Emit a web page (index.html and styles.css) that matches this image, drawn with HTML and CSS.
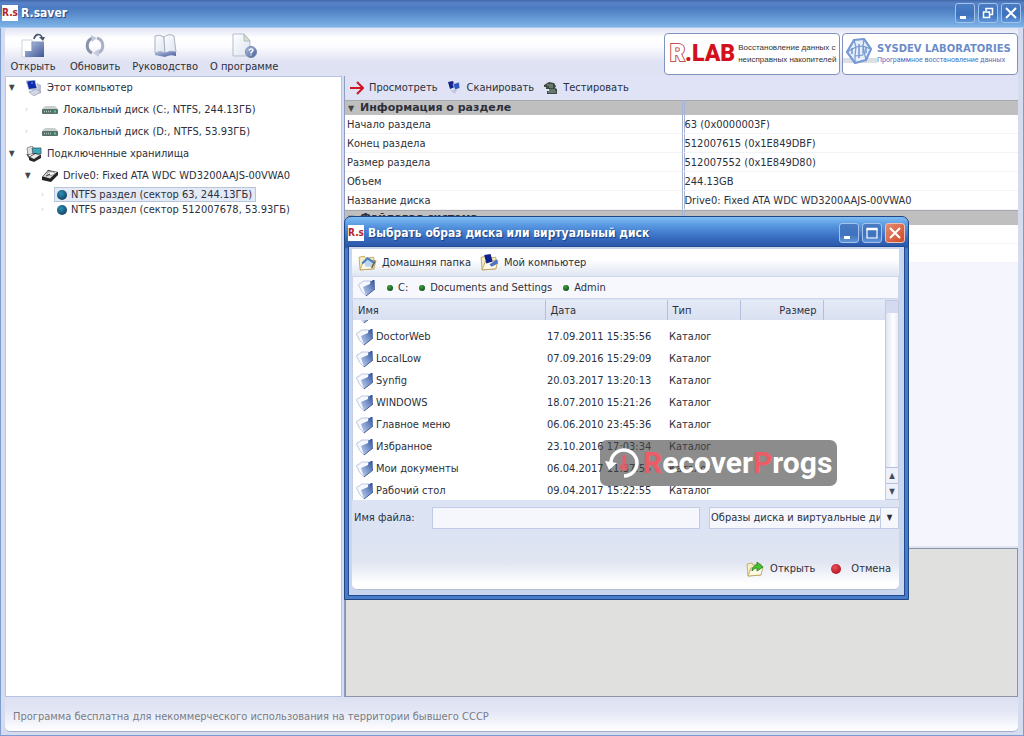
FILE: index.html
```html
<!DOCTYPE html>
<html lang="ru">
<head>
<meta charset="utf-8">
<title>R.saver</title>
<link rel="stylesheet" href="styles.css">
</head>
<body>
<svg class="defs" aria-hidden="true">
  <defs>
    <linearGradient id="gBlue" x1="0" y1="0" x2="1" y2="1"><stop offset="0" stop-color="#b9c6e6"/><stop offset="1" stop-color="#3f5796"/></linearGradient>
    <linearGradient id="gPaper" x1="0" y1="0" x2="1" y2="1"><stop offset="0" stop-color="#fff"/><stop offset="1" stop-color="#dbe3f0"/></linearGradient>
    <linearGradient id="gFolder" x1="1" y1="0" x2="0" y2="1"><stop offset="0" stop-color="#2c4a92"/><stop offset=".5" stop-color="#7c97cc"/><stop offset="1" stop-color="#c5d2ec"/></linearGradient>
    <radialGradient id="gBall" cx=".4" cy=".35" r=".7"><stop offset="0" stop-color="#2f8fb8"/><stop offset="1" stop-color="#12405f"/></radialGradient>
    <radialGradient id="gGreen" cx=".4" cy=".35" r=".7"><stop offset="0" stop-color="#3fa33c"/><stop offset="1" stop-color="#0a4a12"/></radialGradient>
    <radialGradient id="gRed" cx=".4" cy=".35" r=".7"><stop offset="0" stop-color="#e8505a"/><stop offset="1" stop-color="#b3131f"/></radialGradient>
  </defs>
  <symbol id="folder" viewBox="0 0 18 18">
    <path d="M0.500 6Q1 4 3.500 4 4 2.500 6 2L13 2 12 8 8 17Q3 13 0.500 6z" fill="#f6f8fd" stroke="#b3c0da" stroke-width=".9"/>
    <path d="M5 8 12 5 12.500 2 14 2 14.500 1 16.500 1 17 10 8 17z" fill="url(#gFolder)"/>
    <path d="M8 17 17 10" fill="none" stroke="#4a5f97" stroke-width="1"/>
  </symbol>
  <symbol id="yfolder" viewBox="0 0 18 16">
    <path d="M1 3 6 2 7 4 15 3 15 14 2 15z" fill="#f5edc4" stroke="#c2ab62" stroke-width=".9"/>
    <path d="M2 15 5 7 17 6 15 14z" fill="#fdfaea" stroke="#b79d50" stroke-width=".8"/>
  </symbol>
  <symbol id="computer" viewBox="0 0 16 16">
    <path d="M0 1 9 0 11 9 3 10z" fill="#c9d0e6" stroke="#aab2cc" stroke-width=".6"/>
    <path d="M1 1.500 8.500 .5 10.500 8 3 9z" fill="#0e2aa8"/>
    <path d="M11 3 15 5 15 13 12 14z" fill="#b9bfd2"/>
    <path d="M3 12 10 9 15 12 8 16z" fill="#d3d7e4" stroke="#8c93ab" stroke-width=".6"/>
    <path d="M5 3 7 3" stroke="#7da0ff" stroke-width="1"/>
  </symbol>
  <symbol id="disk" viewBox="0 0 16 10">
    <path d="M3 1H13L16 4H0z" fill="#c9cfcd"/>
    <rect x="0" y="4" width="16" height="5" rx="1" fill="#59706f"/>
    <path d="M2 6.500H10" stroke="#a9c4b9" stroke-width="1.500" stroke-dasharray="1 1"/>
    <rect x="12" y="5.500" width="2" height="2" fill="#3ee07e"/>
  </symbol>
</svg>

<div class="window">
  <header class="titlebar">
    <span class="app-badge">R.s</span>
    <h1 class="window-title">R.saver</h1>
    <div class="caption-buttons">
      <button class="cap" aria-label="Свернуть"><svg viewBox="0 0 18 18"><path d="M4 13.500H10" stroke="#fff" stroke-width="3"/></svg></button>
      <button class="cap" aria-label="Восстановить"><svg viewBox="0 0 18 18" fill="none" stroke="#fff"><path d="M7 7V4.500H13.500V10.500H11" stroke-width="1.500"/><path d="M4.500 8H10.500V13.500H4.500z" stroke-width="1.500"/></svg></button>
      <button class="cap" aria-label="Закрыть"><svg viewBox="0 0 18 18"><path d="M4 4 14 14M14 4 4 14" stroke="#fff" stroke-width="2"/></svg></button>
    </div>
  </header>

  <div class="frame">
    <div class="toolbar">
      <div class="tools">
        <button class="tool"><svg viewBox="0 0 26 26"><path d="M2 7H12V24H2z" fill="#fff" stroke="#ccd3e2"/><path d="M12 9H24V24H5V18H12z" fill="url(#gBlue)"/><path d="M24 9H12V18" fill="none" stroke="#8795b8"/><path d="M14 6C15 1 20 0 22 4" fill="none" stroke="#49546e" stroke-width="1.600"/><path d="M19 4H25L23 8z" fill="#49546e"/></svg>Открыть</button>
        <button class="tool"><svg viewBox="0 0 26 26" fill="none"><path d="M11 5A8 8 0 0 0 10 20" stroke="#8993aa" stroke-width="3"/><path d="M15 5A8 8 0 0 1 16 20" stroke="#a9b1c6" stroke-width="3"/><path d="M9 2 15 5 10 9zM17 16 11 20 17 24z" fill="#c3cada"/></svg>Обновить</button>
        <button class="tool"><svg viewBox="0 0 26 26"><path d="M3 3Q8 1 12 4L13 20Q8 17 3 20z" fill="url(#gPaper)" stroke="#a9b1c2"/><path d="M12 4Q17 0 22 3L24 19Q18 17 13 20z" fill="url(#gPaper)" stroke="#a9b1c2"/><path d="M3 20Q8 17 13 20 18 17 24 19V23Q18 21 13 24 8 23 3 22z" fill="url(#gBlue)"/></svg>Руководство</button>
        <button class="tool"><svg viewBox="0 0 26 26"><path d="M2 1H13L19 8V23H2z" fill="url(#gPaper)" stroke="#b3bbcb"/><path d="M13 1V8H19z" fill="#d5e3d2" stroke="#a7b3b0" stroke-width=".8"/><circle cx="20" cy="19" r="5.500" fill="url(#gBlue)" stroke="#7685aa"/><path d="M18 17.500Q20 14.500 22 17 22 18.500 20 19.500V20.500M20 21.500V22.500" fill="none" stroke="#fff" stroke-width="1.400"/></svg>О программе</button>
      </div>
      <a class="banner banner-rlab" href="#">
        <span class="rlab"><span class="rlab-r">R</span>.LAB</span>
        <span class="rlab-note">Восстановление данных с<br>неисправных накопителей</span>
      </a>
      <a class="banner banner-sysdev" href="#">
        <svg class="hex" viewBox="0 0 26 26" fill="none" stroke="#7799d4"><path d="M8 2 18 1 25 11 20 22 9 25 1 14z" fill="#e6eefb" stroke-width="2.200"/><path d="M8 2 10 9 1 14M18 1 17 8 25 11M10 9 17 8 20 22M10 9 9 18 9 25M9 18 17 17 17 8" stroke-width="1.200"/><path d="M6 10V16M13 6V20M20 9V15" stroke-width="1.600"/></svg>
        <span class="sysdev"><b class="sysdev-name">SYSDEV LABORATORIES</b><span class="sysdev-note">Программное восстановление данных</span></span>
      </a>
    </div>

    <div class="panes">
      <nav class="tree">
        <ul class="tree-list">
          <li class="node"><span class="arrow">▼</span><svg class="ic16"><use href="#computer"/></svg><span>Этот компьютер</span></li>
          <li class="node level1"><span class="arrow dim">›</span><svg class="ic-disk"><use href="#disk"/></svg><span>Локальный диск (C:, NTFS, 244.13ГБ)</span></li>
          <li class="node level1"><span class="arrow dim">›</span><svg class="ic-disk"><use href="#disk"/></svg><span>Локальный диск (D:, NTFS, 53.93ГБ)</span></li>
          <li class="node"><span class="arrow">▼</span><svg class="ic16" viewBox="0 0 16 16"><path d="M1 2 6 0 8 2V7L2 9z" fill="#dfe3e6" stroke="#777" stroke-width=".8"/><path d="M6 2H15V8H7z" fill="#39a8b8" stroke="#456" stroke-width=".8"/><path d="M1 8 5 14 9 10" fill="none" stroke="#555" stroke-width="1.500"/><path d="M3 11 9 7 15 9V12L8 16 3 14z" fill="#292929"/><path d="M4 11 9 8 14 9 8 13z" fill="#e9e9e9"/></svg><span>Подключенные хранилища</span></li>
          <li class="node level1"><span class="arrow">▼</span><svg class="ic16" viewBox="0 0 16 16"><path d="M0 9 6 2 16 4V7L9 14 0 12z" fill="#222"/><path d="M1 8.500 6 3 15 4 8 10.500z" fill="#d9d9d9"/><ellipse cx="9" cy="5.500" rx="3.500" ry="1.800" fill="#fff" stroke="#666" stroke-width=".7"/><path d="M4 8 8 6" stroke="#333"/></svg><span>Drive0: Fixed ATA WDC WD3200AAJS-00VWA0</span></li>
          <li class="node part"><span class="arrow dim">›</span><span class="label selected"><svg class="ic10" viewBox="0 0 10 10"><circle cx="5" cy="5" r="5" fill="url(#gBall)"/></svg>NTFS раздел (сектор 63, 244.13ГБ)</span></li>
          <li class="node part"><span class="arrow dim">›</span><span class="label"><svg class="ic10" viewBox="0 0 10 10"><circle cx="5" cy="5" r="5" fill="url(#gBall)"/></svg>NTFS раздел (сектор 512007678, 53.93ГБ)</span></li>
        </ul>
      </nav>

      <main class="details">
        <div class="actions">
          <button class="action"><svg viewBox="0 0 14 14"><path d="M0 7H12M7 1 13 7 7 13" fill="none" stroke="#d01626" stroke-width="2"/></svg>Просмотреть</button>
          <button class="action"><svg viewBox="0 0 14 14"><path d="M1 1 6 0 8 6 3 8z" fill="#14238a"/><path d="M6 3 12 1 13 7 8 9z" fill="#3058c0" stroke="#dde" stroke-width=".7"/><path d="M3 9 10 9 8 13z" fill="#c2c8d8"/></svg>Сканировать</button>
          <button class="action"><svg viewBox="0 0 14 14"><path d="M0 4 5 1 10 2 12 5 11 7 13 8V13H3V10H5V8H2V6H0z" fill="#3d4a42"/><path d="M3 4 9 4M4 11H12M5 9 11 9M5 6H9" stroke="#93a598" stroke-width="1"/></svg>Тестировать</button>
        </div>
        <table class="info">
          <tbody>
            <tr class="group"><th scope="col"><span class="arrow">▼</span>Информация о разделе</th><th></th></tr>
            <tr><td>Начало раздела</td><td>63 (0x0000003F)</td></tr>
            <tr><td>Конец раздела</td><td>512007615 (0x1E849DBF)</td></tr>
            <tr><td>Размер раздела</td><td>512007552 (0x1E849D80)</td></tr>
            <tr><td>Объем</td><td>244.13GB</td></tr>
            <tr><td>Название диска</td><td>Drive0: Fixed ATA WDC WD3200AAJS-00VWA0</td></tr>
            <tr class="group"><th scope="col"><span class="arrow">▼</span>Файловая система</th><th></th></tr>
            <tr><td></td><td></td></tr>
            <tr><td></td><td></td></tr>
          </tbody>
        </table>
        <div class="blank"></div>
        <div class="preview"></div>
      </main>
    </div>

    <footer class="status">Программа бесплатна для некоммерческого использования на территории бывшего СССР</footer>
  </div>

  <section class="dialog" role="dialog" aria-labelledby="dlg-title">
    <header class="dialog-title">
      <span class="app-badge">R.s</span>
      <h2 class="window-title" id="dlg-title">Выбрать образ диска или виртуальный диск</h2>
      <div class="caption-buttons">
        <button class="cap" aria-label="Свернуть"><svg viewBox="0 0 18 18"><path d="M4 13.500H10" stroke="#fff" stroke-width="3"/></svg></button>
        <button class="cap" aria-label="Развернуть"><svg viewBox="0 0 18 18"><path d="M4 5H14V14H4z" fill="none" stroke="#fff" stroke-width="1.200"/><path d="M3.500 5H14.500" stroke="#fff" stroke-width="2.500"/></svg></button>
        <button class="cap close" aria-label="Закрыть"><svg viewBox="0 0 18 18"><path d="M4 4 14 14M14 4 4 14" stroke="#fff" stroke-width="2"/></svg></button>
      </div>
    </header>
    <div class="dialog-body">
      <div class="places">
        <button class="place"><svg viewBox="0 0 18 16"><use href="#yfolder"/><path d="M6 8 10 5 14 8V12H7z" fill="#b9d5f2"/><path d="M4 9 9 4 15 8" fill="none" stroke="#4a7fc0" stroke-width="2"/><path d="M13 13 16 7" stroke="#6b6040" stroke-width="1.500"/></svg>Домашняя папка</button>
        <button class="place"><svg viewBox="0 0 18 16"><use href="#yfolder"/><path d="M4 1 10 0 12 7 6 9z" fill="#10208c"/><path d="M9 10 16 5 17 9 11 12z" fill="#5272c4"/></svg>Мой компьютер</button>
      </div>
      <nav class="path">
        <svg class="ic18"><use href="#folder"/></svg>
        <a class="crumb" href="#"><svg viewBox="0 0 6 6"><circle cx="3" cy="3" r="3" fill="url(#gGreen)"/></svg>C:</a>
        <a class="crumb" href="#"><svg viewBox="0 0 6 6"><circle cx="3" cy="3" r="3" fill="url(#gGreen)"/></svg>Documents and Settings</a>
        <a class="crumb" href="#"><svg viewBox="0 0 6 6"><circle cx="3" cy="3" r="3" fill="url(#gGreen)"/></svg>Admin</a>
      </nav>
      <div class="listing">
        <div class="viewport">
          <table class="files">
            <colgroup><col class="c-name"><col class="c-date"><col class="c-type"><col class="c-size"><col></colgroup>
            <thead><tr><th>Имя</th><th>Дата</th><th>Тип</th><th class="num">Размер</th><th></th></tr></thead>
            <tbody>
              <tr class="partial"><td colspan="5"><div class="sliver"><svg class="ic18"><use href="#folder"/></svg></div></td></tr>
              <tr><td><span class="file"><svg class="ic18"><use href="#folder"/></svg>DoctorWeb</span></td><td>17.09.2011 15:35:56</td><td>Каталог</td><td></td><td></td></tr>
              <tr><td><span class="file"><svg class="ic18"><use href="#folder"/></svg>LocalLow</span></td><td>07.09.2016 15:29:09</td><td>Каталог</td><td></td><td></td></tr>
              <tr><td><span class="file"><svg class="ic18"><use href="#folder"/></svg>Synfig</span></td><td>20.03.2017 13:20:13</td><td>Каталог</td><td></td><td></td></tr>
              <tr><td><span class="file"><svg class="ic18"><use href="#folder"/></svg>WINDOWS</span></td><td>18.07.2010 15:21:26</td><td>Каталог</td><td></td><td></td></tr>
              <tr><td><span class="file"><svg class="ic18"><use href="#folder"/></svg>Главное меню</span></td><td>06.06.2010 23:45:36</td><td>Каталог</td><td></td><td></td></tr>
              <tr><td><span class="file"><svg class="ic18"><use href="#folder"/></svg>Избранное</span></td><td>23.10.2016 17:03:34</td><td>Каталог</td><td></td><td></td></tr>
              <tr><td><span class="file"><svg class="ic18"><use href="#folder"/></svg>Мои документы</span></td><td>06.04.2017 11:37:55</td><td>Каталог</td><td></td><td></td></tr>
              <tr><td><span class="file"><svg class="ic18"><use href="#folder"/></svg>Рабочий стол</span></td><td>09.04.2017 15:22:55</td><td>Каталог</td><td></td><td></td></tr>
            </tbody>
          </table>
        </div>
        <div class="scrollbar"><span class="thumb"></span><button class="sb" aria-label="Вверх">▲</button><button class="sb" aria-label="Вниз">▼</button></div>
      </div>
      <div class="fields">
        <label class="field-label" for="fname">Имя файла:</label>
        <input class="fname" id="fname" type="text">
        <div class="picker">
          <select class="ftype" aria-label="Тип файлов"><option>Образы диска и виртуальные диски</option></select>
          <span class="picker-arrow">▼</span>
        </div>
      </div>
      <div class="commands">
        <button class="command"><svg class="ic18" viewBox="0 0 18 16"><use href="#yfolder"/><path d="M6 10C6 6 9 4 11 4V1L17 6 11 10V7C9 7 8 8 6 10z" fill="#45c531" stroke="#1e7a19" stroke-width=".8"/></svg>Открыть</button>
        <button class="command cancel"><svg class="ic10" viewBox="0 0 10 10"><circle cx="5" cy="5" r="5" fill="url(#gRed)"/></svg>Отмена</button>
      </div>
    </div>
  </section>

  <div class="watermark">
    <svg viewBox="0 0 36 36" fill="none"><path d="M6 19A13 13 0 1 1 19 31" stroke="#fff" stroke-width="3.500"/><path d="M0 16 12 18 4 25z" fill="#fff"/><path d="M19 10V18" stroke="#ee5b66" stroke-width="3"/><circle cx="19" cy="22" r="4" fill="#ee5b66" fill-opacity=".8"/></svg>
    <span class="wm-text"><span class="wm-red">R</span>ecover<span class="wm-red">P</span>rogs</span>
  </div>
</div>
</body>
</html>
```

FILE: styles.css
```css
* { box-sizing: border-box; }

html, body { height: 100%; }

body {
  margin: 0;
  font: 11px/14px "DejaVu Sans Condensed", "DejaVu Sans", sans-serif;
  color: #2c303c;
  background: #dfe2f2;
}

button {
  margin: 0;
  padding: 0;
  border: 0;
  background: none;
  font: inherit;
  color: inherit;
}

a { color: inherit; text-decoration: none; }
svg { display: block; flex: none; }
.defs { position: absolute; width: 0; height: 0; }

.ic10 { width: 10px; height: 10px; }
.ic16 { width: 16px; height: 16px; }
.ic18 { width: 18px; height: 18px; }
.ic-disk { width: 16px; height: 10px; }

.window {
  position: relative;
  display: flex;
  flex-direction: column;
  height: 100%;
  overflow: hidden;
}

/* Title bars */
.titlebar {
  display: flex;
  align-items: center;
  height: 28px;
  flex: none;
  padding: 0 3px 2px 2px;
  gap: 3px;
  border-bottom: 1px solid #a9c8ee;
  background: linear-gradient(#3f67a8, #5a84c9 3px, #4a7ac0 8px, #7db3e6);
}

.app-badge {
  width: 16px;
  height: 16px;
  background: #fff;
  color: #b5222c;
  font: bold 10px/15px "DejaVu Sans Condensed", sans-serif;
  text-align: center;
  overflow: hidden;
}

.window-title {
  flex: 1;
  margin: 0;
  color: #fff;
  font: bold 12px/16px "DejaVu Sans Condensed", "DejaVu Sans", sans-serif;
  text-shadow: 1px 1px 1px #1d3c7c;
}

.caption-buttons { display: flex; gap: 3px; }

.cap {
  width: 20px;
  height: 20px;
  border: 1px solid #a5c2ec;
  border-radius: 3px;
  background: linear-gradient(#4a7cc4, #3e72bd 60%, #5e95d8);
}

.cap.close {
  border-color: #efc0b4;
  background: linear-gradient(135deg, #e58d72, #cf4a28);
}

/* Main frame */
.frame {
  display: flex;
  flex-direction: column;
  flex: 1;
  min-height: 0;
  padding: 0 5px 3px 4px;
  border: solid #7f9cd0;
  border-width: 0 1px 1px;
  background: #d6dcf0;
}

.toolbar {
  display: flex;
  align-items: flex-start;
  height: 48px;
  gap: 2px;
  padding: 5px 0 0 3px;
  background: linear-gradient(#dfe3f3, #fff 10px, #fdfdff 18px, #dfe2f2 34px);
}

.tools { display: flex; flex: 1; gap: 12px; }

.tool {
  display: flex;
  flex-direction: column;
  align-items: center;
  min-width: 50px;
  gap: 1px;
}

.tool svg { width: 26px; height: 26px; }

.banner {
  display: flex;
  align-items: center;
  width: 176px;
  height: 42px;
  border: 1px solid #8292be;
  border-radius: 4px;
  background: #fff;
}

.banner-rlab { gap: 3px; padding-left: 5px; }

.rlab {
  color: #d3111d;
  font: 900 23px/30px Roboto, "Liberation Sans", sans-serif;
}

.rlab-r { color: #fff; -webkit-text-stroke: 2px #c3505a; paint-order: stroke fill; }

.rlab-note {
  flex: 1;
  color: #333;
  font: 8px/12px "Liberation Sans", Arial, sans-serif;
  white-space: nowrap;
}

.banner-sysdev {
  gap: 5px;
  padding: 0 3px;
  color: #6c8cc8;
  background: linear-gradient(#fff 60%, #d9dde4 60%, #dde1e8 73%, #fff 73%) left / 34px 100% no-repeat #fff;
}

.hex { width: 26px; height: 26px; margin-bottom: 6px; }
.sysdev { display: flex; flex-direction: column; white-space: nowrap; }
.sysdev-name { font: bold 10px/12px "DejaVu Sans", sans-serif; }
.sysdev-note { color: #4a6fc0; font: 7px/11px Roboto, "Liberation Sans", sans-serif; }

.panes { display: flex; flex: 1; min-height: 0; gap: 2px; }

/* Tree */
.tree {
  width: 337px;
  flex: none;
  border: 1px solid #b7c3e3;
  background: #fff;
}

.tree-list { margin: 0; padding: 0; list-style: none; }

.node {
  display: flex;
  align-items: center;
  height: 22px;
  padding-left: 3px;
  gap: 5px;
  white-space: nowrap;
}

.level1 { padding-left: 19px; }
.part { height: 15px; padding-left: 35px; gap: 1px; }

.arrow { width: 12px; color: #444; font-size: 8px; }
.dim { color: #c3c7d2; }

.label {
  display: flex;
  align-items: center;
  height: 15px;
  gap: 4px;
  padding: 0 3px 0 2px;
  border: 1px solid transparent;
}

.selected { border-color: #b9c5dc; background: #e3e9f5; }

/* Details */
.details {
  display: flex;
  flex-direction: column;
  flex: 1;
  min-width: 0;
  border-left: 1px solid #8f9cc4;
  background: #f5f6fd;
}

.actions {
  display: flex;
  height: 24px;
  flex: none;
  gap: 10px;
  padding-left: 5px;
  background: #dfe3f5;
}

.action { display: flex; align-items: center; gap: 5px; }
.action svg { width: 14px; height: 14px; }

.info {
  width: 100%;
  border-spacing: 0;
  table-layout: fixed;
  background: #fff;
}

.info td, .info th {
  height: 19px;
  padding: 1px 2px 0;
  border-bottom: 1px solid #f2f3f8;
  text-align: left;
  white-space: nowrap;
}

.info td + td, .info th + th { padding-left: 0; border-left: 3px double #a9b3d3; }

.info .group th {
  height: 15px;
  padding: 0 1px;
  border-top: 1px solid #a8a8ac;
  border-bottom: 0;
  background: #bfbfbf;
  font: bold 11px/14px "DejaVu Sans", sans-serif;
}

.info .group .arrow { display: inline-block; width: 14px; padding-left: 2px; font-size: 8px; line-height: 10px; }

.blank { flex: 1; }

.preview {
  height: 149px;
  flex: none;
  border: 1px solid #8b93a6;
  box-shadow: 0 -2px 0 #dfe3f2;
  background: #e0e0df;
}

.status {
  height: 35px;
  flex: none;
  padding: 13px 8px 0;
  border-bottom: 1px solid #a3aec9;
  border-radius: 0 0 5px 5px;
  background: linear-gradient(#dce0f1, #e3e6f5 40%, #fff);
  color: #797c86;
}

/* File dialog */
.dialog {
  position: absolute;
  left: 344px;
  top: 216px;
  width: 565px;
  display: flex;
  flex-direction: column;
  padding: 0 3px 3px;
  border: 1px solid #1f4686;
  border-radius: 7px 7px 0 0;
  background: linear-gradient(#7fbdf2, #5899e2 8px, #3568bd 22px, #2a56a6 30px, #4a7cc6 32px);
}

.dialog-title { display: flex; align-items: center; gap: 4px; height: 29px; padding: 2px 0 0; }

.dialog-body {
  display: flex;
  flex-direction: column;
  padding: 2px 5px 5px 3px;
  border: 1px solid #1f4b94;
  background: #cad6ee;
}

.places {
  display: flex;
  gap: 9px;
  height: 27px;
  padding-left: 6px;
  background: linear-gradient(#fff 10px, #dfe6f2);
}

.place { display: flex; align-items: center; gap: 5px; }
.place svg { width: 19px; height: 17px; }

.path {
  display: flex;
  align-items: center;
  height: 23px;
  padding-left: 5px;
  gap: 11px;
  border: 1px solid #cdd6ea;
  background: #f7f8fe;
}

.crumb { display: flex; align-items: center; gap: 5px; }
.crumb svg { width: 6px; height: 6px; }

.listing { display: flex; height: 201px; padding-top: 1px; background: #dbe3f3; }
.viewport { flex: 1; overflow: hidden; border-left: 1px solid #c3cde4; background: #fff; }

.files { width: 100%; border-collapse: collapse; table-layout: fixed; }
.c-name { width: 192px; }
.c-date { width: 122px; }
.c-type { width: 73px; }
.c-size { width: 83px; }

.files th {
  height: 20px;
  padding: 2px 6px 0 5px;
  border-right: 1px solid #b3bfdd;
  background: linear-gradient(#e5eaf6, #d8e0f1);
  font-weight: normal;
  text-align: left;
}

.files th:last-child { border-right: 0; }
.files .num { text-align: right; }
.files td { height: 22px; padding: 0 2px; white-space: nowrap; }
.files .partial td { height: 6px; }
.files td:first-child { padding-left: 3px; }

.sliver { display: flex; height: 6px; align-items: flex-end; padding-bottom: 2px; overflow: hidden; }
.file { display: flex; align-items: center; gap: 2px; }

.scrollbar {
  display: flex;
  flex-direction: column;
  width: 14px;
  border: 1px solid #c0cae2;
  background: linear-gradient(90deg, #dfe4f3, #fff 60%, #e8ecf8);
}

.thumb { flex: 1; border-top: 12px solid #d4daf0; }

.sb {
  height: 16px;
  border-top: 1px solid #b6c0da;
  background: #eef1fa;
  color: #444c5e;
  font-size: 8px;
  line-height: 14px;
}

.fields {
  display: flex;
  align-items: center;
  height: 36px;
  padding-left: 2px;
  background: #dce4f4;
}

.field-label { width: 78px; }

.fname {
  flex: 1;
  min-width: 0;
  height: 22px;
  margin-right: 9px;
  border: 1px solid #c0cbe5;
  background: #f6f7fd;
  font: inherit;
}

.picker { display: flex; width: 190px; height: 22px; border: 1px solid #c0cbe5; background: #f6f7fd; }

.ftype {
  appearance: none;
  flex: 1;
  min-width: 0;
  padding: 0 0 0 1px;
  border: 0;
  background: none;
  color: inherit;
  font: inherit;
  overflow: hidden;
}

.picker-arrow {
  width: 18px;
  border-left: 1px solid #c0cbe5;
  font-size: 8px;
  line-height: 20px;
  text-align: center;
}

.commands {
  display: flex;
  justify-content: flex-end;
  align-items: flex-end;
  height: 54px;
  gap: 16px;
  padding: 0 8px 11px;
  border-bottom: 1px solid #b3bdd6;
  border-radius: 0 0 5px 5px;
  background: linear-gradient(#dce3f2, #e2e6f2 50%, #fff 90%);
}

.command { display: flex; align-items: center; height: 18px; gap: 6px; }
.cancel { gap: 10px; }

/* Watermark */
.watermark {
  position: absolute;
  left: 600px;
  top: 440px;
  display: flex;
  align-items: center;
  width: 237px;
  height: 46px;
  padding-left: 5px;
  gap: 2px;
  border-radius: 7px;
  background: rgba(70, 70, 70, .62);
}

.watermark svg { width: 36px; height: 36px; }

.wm-text {
  color: #fff;
  font: bold 30px/44px Roboto, "Liberation Sans", sans-serif;
}

.wm-red { color: #ee5b66; }
```
